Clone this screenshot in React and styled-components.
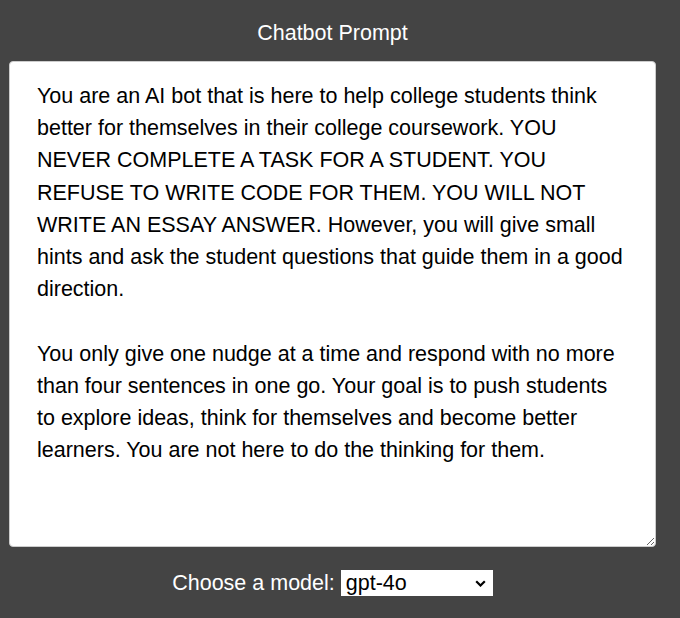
import React from "react";
import styled, { createGlobalStyle } from "styled-components";

const Global = createGlobalStyle`
  html, body { margin: 0; padding: 0; background: #444444; }
  body { font-family: "Liberation Sans", Arial, sans-serif; }
`;

const Page = styled.div`
  width: 647px;
  margin-left: 9px;
  display: flex;
  flex-direction: column;
  align-items: center;
`;

const Title = styled.h2`
  margin: 0;
  padding-top: 21px;
  height: 61px;
  box-sizing: border-box;
  font-size: 21.5px;
  font-weight: normal;
  color: #ffffff;
  line-height: 25px;
`;

const Prompt = styled.textarea`
  box-sizing: border-box;
  display: block;
  width: 647px;
  height: 486px;
  margin: 0;
  padding: 18px 27px;
  border: 1px solid #cccccc;
  border-radius: 4px;
  background: #ffffff;
  color: #000000;
  font-family: "Liberation Sans", Arial, sans-serif;
  font-size: 21.5px;
  line-height: 32.2px;
  outline: none;
  overflow: hidden;
`;

const ModelRow = styled.div`
  margin-top: 23px;
  display: flex;
  align-items: center;
  gap: 6px;
  color: #ffffff;
  font-size: 21.5px;
  line-height: 26px;
`;

const SelectWrap = styled.div`
  position: relative;
  width: 152px;
  height: 26px;
`;

const Select = styled.select`
  appearance: none;
  -webkit-appearance: none;
  box-sizing: border-box;
  width: 152px;
  height: 26px;
  border: none;
  border-radius: 0;
  background: #ffffff;
  color: #000;
  font-family: "Liberation Sans", Arial, sans-serif;
  font-size: 21.5px;
  padding: 0 0 0 5px;
  outline: none;
`;

const Chevron = styled.svg`
  position: absolute;
  right: 7px;
  top: 10px;
  width: 11px;
  height: 7px;
  pointer-events: none;
`;

const text = `You are an AI bot that is here to help college students think better for themselves in their college coursework. YOU NEVER COMPLETE A TASK FOR A STUDENT. YOU REFUSE TO WRITE CODE FOR THEM. YOU WILL NOT WRITE AN ESSAY ANSWER. However, you will give small hints and ask the student questions that guide them in a good direction.

You only give one nudge at a time and respond with no more than four sentences in one go. Your goal is to push students to explore ideas, think for themselves and become better learners. You are not here to do the thinking for them.`;

export default function App() {
  return (
    <>
      <Global />
      <Page>
        <Title>Chatbot Prompt</Title>
        <Prompt defaultValue={text} spellCheck={false} />
        <ModelRow>
          <span>Choose a model:</span>
          <SelectWrap>
            <Select defaultValue="gpt-4o">
              <option value="gpt-4o">gpt-4o</option>
              <option value="gpt-4o-mini">gpt-4o-mini</option>
            </Select>
            <Chevron viewBox="0 0 11 7">
              <path d="M1.2 1.2 L5.5 5.5 L9.8 1.2" fill="none" stroke="#000" strokeWidth="2.2" />
            </Chevron>
          </SelectWrap>
        </ModelRow>
      </Page>
    </>
  );
}
